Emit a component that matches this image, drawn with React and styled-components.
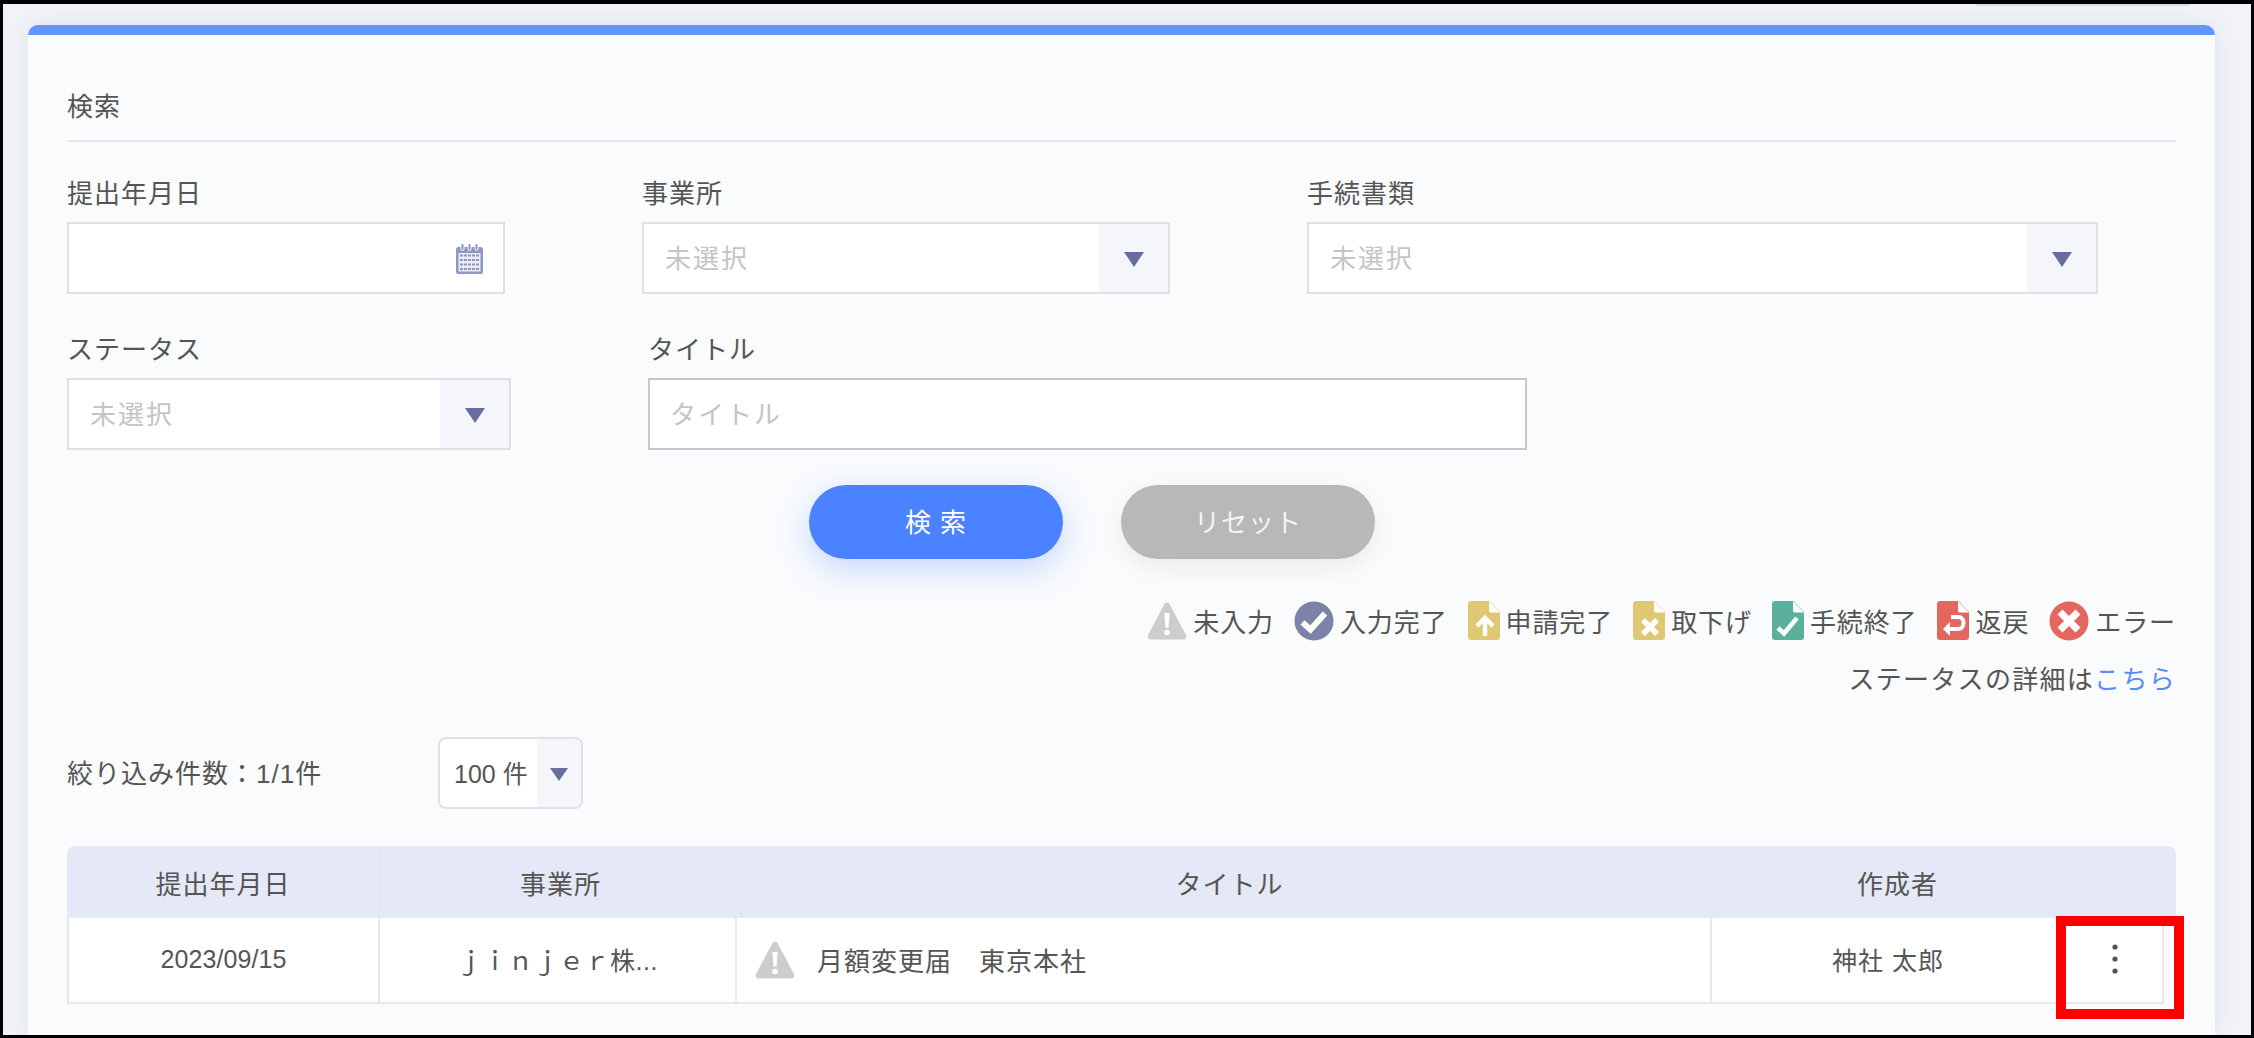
import React from 'react';
import styled, {createGlobalStyle} from 'styled-components';

const GlobalStyle = createGlobalStyle`
    html, body {
        margin: 0;
        padding: 0;
        background: #fff;
        overflow: hidden;
    }
    * {
        box-sizing: border-box;
    }
    body {
        font-family: "Liberation Sans", "Noto Sans CJK JP", sans-serif;
        color: #555;
    }
`;

const Frame = styled.div`
    width: 2254px;
    height: 1038px;
    border: 3px solid #000;
    border-top-width: 4px;
    background: #f1f3f8;
    display: flex;
    flex-direction: column;
    overflow: hidden;
`;

const TopStrip = styled.div`
    height: 21px;
    flex: none;
    display: flex;
    justify-content: flex-end;
    padding-right: 61px;
`;

const TabEdge = styled.div`
    width: 214px;
    height: 2px;
    background: #cfe3e4;
    border-radius: 0 0 4px 4px;
`;

const Card = styled.section`
    flex: 1;
    margin: 0 36px 0 25px;
    padding: 0 39px;
    background: #fafbfd;
    border-top: 10px solid #6495ff;
    border-radius: 10px 10px 0 0;
    box-shadow: 0 0 22px rgba(120, 130, 170, 0.14);
`;

const SectionTitle = styled.h2`
    margin: 0;
    height: 107px;
    padding-top: 55px;
    font-size: 26px;
    line-height: 34px;
    font-weight: 400;
    letter-spacing: 1px;
    border-bottom: 2px solid #e5e6ee;
`;

const FieldRow = styled.div`
    display: flex;
    gap: 137px;
    margin-top: ${p => p.$top}px;
`;

const Field = styled.div`
    width: ${p => p.$width}px;
`;

const Label = styled.div`
    font-size: 26px;
    line-height: 34px;
    height: 34px;
    margin-bottom: 11px;
    letter-spacing: 1px;
`;

const Box = styled.div`
    height: 72px;
    display: flex;
    align-items: center;
    background: #fff;
    border: 2px solid ${p => p.$dark ? '#c6c8cf' : '#e0e1e6'};
    padding-left: ${p => p.$dark ? 20 : 21}px;
`;

const Placeholder = styled.span`
    flex: 1;
    padding-bottom: 4px;
    font-size: 26px;
    letter-spacing: 2px;
    color: #c4c4c4;
`;

const ArrowCell = styled.div`
    width: ${p => p.$width || 69}px;
    align-self: stretch;
    flex: none;
    display: flex;
    align-items: center;
    justify-content: center;
    background: #f5f6fb;
`;

const Arrow = styled.i`
    display: block;
    width: 0;
    height: 0;
    margin-top: 3px;
    border-left: 10px solid transparent;
    border-right: 10px solid transparent;
    border-top: 15px solid #666e9e;
`;

const CalendarSlot = styled.div`
    width: 47px;
    flex: none;
    display: flex;
    align-items: center;
`;

const ButtonRow = styled.div`
    display: flex;
    gap: 58px;
    margin: 35px 0 0 742px;
`;

const PillButton = styled.button`
    width: 254px;
    height: 74px;
    border: none;
    border-radius: 37px;
    padding: 0 0 4px;
    font-family: inherit;
    font-size: 26px;
    letter-spacing: 1px;
    color: ${p => p.$primary ? '#fff' : '#f4f4f4'};
    background: ${p => p.$primary ? '#4a82ff' : '#b8b8b8'};
    box-shadow: ${p => p.$primary
        ? '0 10px 34px rgba(74, 130, 255, 0.3)'
        : '0 8px 26px rgba(0, 0, 0, 0.07)'};
`;

const Legend = styled.div`
    display: flex;
    justify-content: flex-end;
    gap: 20px;
    margin-top: 42px;
`;

const LegendItem = styled.div`
    display: flex;
    align-items: center;
    gap: 6px;
    height: 39px;
    font-size: 26px;
    letter-spacing: 0.9px;
    white-space: nowrap;
`;

const DetailNote = styled.div`
    text-align: right;
    margin-top: 23px;
    font-size: 26px;
    line-height: 34px;
    letter-spacing: 1.3px;
`;

const DetailLink = styled.a`
    color: #5a8aff;
`;

const CountRow = styled.div`
    display: flex;
    align-items: center;
    margin-top: 40px;
`;

const CountText = styled.div`
    width: 371px;
    padding-bottom: 3px;
    font-size: 26px;
    letter-spacing: 1px;
`;

const PerPage = styled.div`
    width: 145px;
    height: 72px;
    display: flex;
    align-items: center;
    background: #fff;
    border: 2px solid #e0e1e6;
    border-radius: 8px;
    overflow: hidden;
    padding-left: 14px;
`;

const PerPageText = styled.span`
    flex: 1;
    padding-bottom: 3px;
    font-size: 25px;
    white-space: nowrap;
`;

const SmallArrow = styled(Arrow)`
    margin-top: 2px;
    border-left-width: 9px;
    border-right-width: 9px;
    border-top-width: 13px;
`;

const Table = styled.div`
    margin-top: 37px;
    font-size: 25px;
`;

const HeadRow = styled.div`
    display: flex;
    height: 72px;
    font-size: 26px;
    background: #e5e8f6;
    border-radius: 8px 8px 0 0;
`;

const HeadCell = styled.div`
    width: ${p => p.$width}px;
    flex: none;
    display: flex;
    align-items: center;
    justify-content: center;
    letter-spacing: 1px;
    border-right: ${p => p.$last ? 'none' : '1px solid #e0e3f1'};
`;

const BodyRow = styled.div`
    position: relative;
    display: flex;
    width: 2097px;
    height: 86px;
    background: #fff;
    border-left: 2px solid #e8e8ea;
    border-bottom: 2px solid #e8e8ea;
`;

const BodyCell = styled.div`
    width: ${p => p.$width}px;
    flex: none;
    display: flex;
    align-items: center;
    justify-content: ${p => p.$left ? 'flex-start' : 'center'};
    gap: 22px;
    padding: 0 0 2px ${p => p.$left ? 18 : 0}px;
    font-size: ${p => p.$left ? 26 : 25}px;
    letter-spacing: ${p => p.$spacing}px;
    border-right: ${p => p.$plain ? 'none' : '2px solid #e8e8ea'};
`;

const KebabSlot = styled.div`
    display: flex;
    margin-left: 4px;
`;

const Highlight = styled.div`
    position: absolute;
    left: 1987px;
    top: -2px;
    width: 128px;
    height: 103px;
    border: 10px solid #ff0000;
    pointer-events: none;
`;

const Warning = () => (
    <svg width="40" height="39" viewBox="0 0 40 39">
        <path d="M20 1.5c1.3 0 2.2.9 2.9 2.3L39 34c1 2.3-.2 4.5-2.8 4.5H3.800C1.200 38.500 0 36.300 1 34L17.100 3.800C17.800 2.400 18.700 1.500 20 1.500z" fill="#cccecc" />
        <path d="M17.400 12h5.200l-1 14.500h-3.200z" fill="#fff" />
        <circle cx="20" cy="31.500" r="2.800" fill="#fff" />
    </svg>
);

const CheckCircle = () => (
    <svg width="40" height="40" viewBox="0 0 40 40">
        <circle cx="20" cy="20" r="19.500" fill="#7c82a8" />
        <path d="M8.500 21.500l8 7L31 12.500" fill="none" stroke="#fff" strokeWidth="6" />
    </svg>
);

const FileShape = ({color, children}) => (
    <svg width="32" height="39" viewBox="0 0 32 39">
        <path d="M3 0h18l11 11v25c0 1.700-1.300 3-3 3H3c-1.700 0-3-1.300-3-3V3c0-1.700 1.300-3 3-3z" fill={color} />
        <path d="M21 0.500L32 11.500H23c-1.200 0-2-.8-2-2z" fill="#fff" />
        {children}
    </svg>
);

const ErrorCircle = () => (
    <svg width="40" height="40" viewBox="0 0 40 40">
        <circle cx="20" cy="20" r="19.500" fill="#e4675f" />
        <path d="M11 11l18 18M29 11L11 29" fill="none" stroke="#fff" strokeWidth="7" />
    </svg>
);

const CalendarIcon = () => (
    <svg width="27" height="31" viewBox="0 0 27 31">
        <rect x="0" y="4" width="27" height="27" rx="2.500" fill="#8f96c0" />
        <rect x="5" y="0.500" width="3" height="7" rx="1.500" fill="#8f96c0" stroke="#fafbfe" strokeWidth="1" />
        <rect x="12" y="0.500" width="3" height="7" rx="1.500" fill="#8f96c0" stroke="#fafbfe" strokeWidth="1" />
        <rect x="19" y="0.500" width="3" height="7" rx="1.500" fill="#8f96c0" stroke="#fafbfe" strokeWidth="1" />
        <rect x="2.500" y="10" width="22" height="18.500" fill="#e9ebf5" />
        <path d="M4 12.500h19M4 17h19M4 21.500h19M4 26h19" stroke="#8f96c0" strokeWidth="2" strokeDasharray="3 1" />
    </svg>
);

const KebabIcon = () => (
    <svg width="6" height="30" viewBox="0 0 6 30">
        <circle cx="3" cy="3" r="2.600" fill="#555" />
        <circle cx="3" cy="15" r="2.600" fill="#555" />
        <circle cx="3" cy="27" r="2.600" fill="#555" />
    </svg>
);

const legend = [
    {label: '未入力', icon: <Warning />},
    {label: '入力完了', icon: <CheckCircle />},
    {
        label: '申請完了',
        icon: (
            <FileShape color="#dfc773">
                <path d="M17 35V18M9 25l8-8 8 8" fill="none" stroke="#fff" strokeWidth="4.500" />
            </FileShape>
        ),
    },
    {
        label: '取下げ',
        icon: (
            <FileShape color="#dfc773">
                <path d="M10 19l14 14M24 19L10 33" fill="none" stroke="#fff" strokeWidth="5.500" />
            </FileShape>
        ),
    },
    {
        label: '手続終了',
        icon: (
            <FileShape color="#5bb09c">
                <path d="M6 27l6 5.500L25 17" fill="none" stroke="#fff" strokeWidth="4.500" />
            </FileShape>
        ),
    },
    {
        label: '返戻',
        icon: (
            <FileShape color="#e4675f">
                <path d="M14 16h7c3.500 0 5.500 2.500 5.500 6s-2 6-5.500 6H12" fill="none" stroke="#fff" strokeWidth="4" />
                <path d="M13 21l-7 7 7 7z" fill="#fff" />
            </FileShape>
        ),
    },
    {label: 'エラー', icon: <ErrorCircle />},
];

export default function App() {
    return (
        <Frame>
            <GlobalStyle />
            <TopStrip>
                <TabEdge />
            </TopStrip>
            <Card>
                <SectionTitle>検索</SectionTitle>

                <FieldRow $top={35}>
                    <Field $width={438}>
                        <Label>提出年月日</Label>
                        <Box>
                            <Placeholder />
                            <CalendarSlot>
                                <CalendarIcon />
                            </CalendarSlot>
                        </Box>
                    </Field>
                    <Field $width={528}>
                        <Label>事業所</Label>
                        <Box>
                            <Placeholder>未選択</Placeholder>
                            <ArrowCell><Arrow /></ArrowCell>
                        </Box>
                    </Field>
                    <Field $width={791}>
                        <Label>手続書類</Label>
                        <Box>
                            <Placeholder>未選択</Placeholder>
                            <ArrowCell><Arrow /></ArrowCell>
                        </Box>
                    </Field>
                </FieldRow>

                <FieldRow $top={39}>
                    <Field $width={444}>
                        <Label>ステータス</Label>
                        <Box>
                            <Placeholder>未選択</Placeholder>
                            <ArrowCell><Arrow /></ArrowCell>
                        </Box>
                    </Field>
                    <Field $width={879}>
                        <Label>タイトル</Label>
                        <Box $dark>
                            <Placeholder>タイトル</Placeholder>
                        </Box>
                    </Field>
                </FieldRow>

                <ButtonRow>
                    <PillButton $primary>検 索</PillButton>
                    <PillButton>リセット</PillButton>
                </ButtonRow>

                <Legend>
                    {legend.map(item => (
                        <LegendItem key={item.label}>
                            {item.icon}
                            {item.label}
                        </LegendItem>
                    ))}
                </Legend>
                <DetailNote>
                    ステータスの詳細は<DetailLink>こちら</DetailLink>
                </DetailNote>

                <CountRow>
                    <CountText>絞り込み件数：1/1件</CountText>
                    <PerPage>
                        <PerPageText>100 件</PerPageText>
                        <ArrowCell $width={44}><SmallArrow /></ArrowCell>
                    </PerPage>
                </CountRow>

                <Table>
                    <HeadRow>
                        <HeadCell $width={313}>提出年月日</HeadCell>
                        <HeadCell $width={362}>事業所</HeadCell>
                        <HeadCell $width={976}>タイトル</HeadCell>
                        <HeadCell $width={360}>作成者</HeadCell>
                        <HeadCell $width={98} $last />
                    </HeadRow>
                    <BodyRow>
                        <BodyCell $width={311} $spacing={0.1}>2023/09/15</BodyCell>
                        <BodyCell $width={357} $spacing={0.5}>ｊｉｎｊｅｒ株...</BodyCell>
                        <BodyCell $width={975} $spacing={1} $left>
                            <Warning />
                            月額変更届　東京本社
                        </BodyCell>
                        <BodyCell $width={352} $spacing={1} $plain>神社 太郎</BodyCell>
                        <BodyCell $width={100} $spacing={0}>
                            <KebabSlot><KebabIcon /></KebabSlot>
                        </BodyCell>
                        <Highlight />
                    </BodyRow>
                </Table>
            </Card>
        </Frame>
    );
}
